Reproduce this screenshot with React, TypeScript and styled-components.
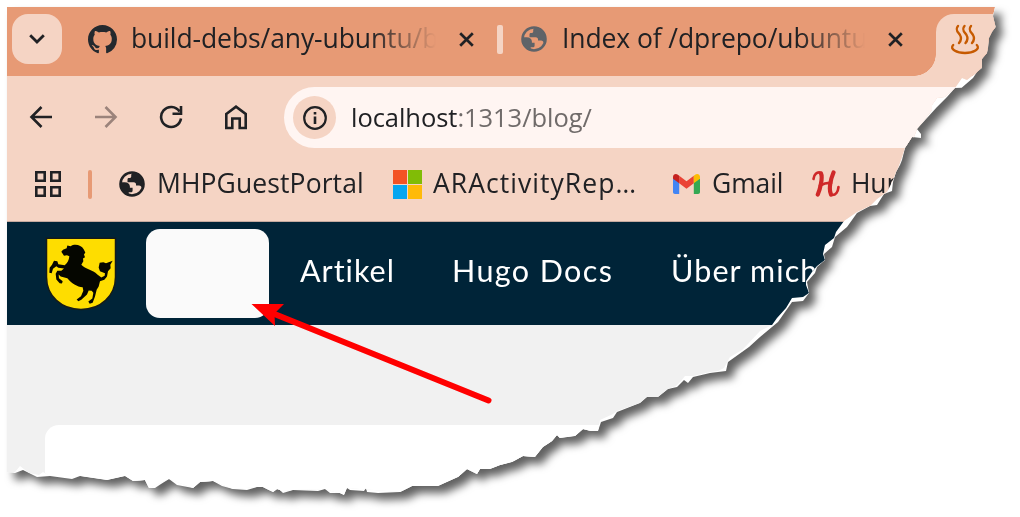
import React from "react";
import styled, { createGlobalStyle } from "styled-components";

const Global = createGlobalStyle`
  * { box-sizing: border-box; }
  body { margin: 0; background: #fff; overflow: hidden; }
`;

const ui = `"Open Sans", "Noto Sans", sans-serif`;

const paperEdge =
  "M0 0L988 0L986 9L988.7 20L985 25L982 31L981 41L980 46L975 52L975 61L970 65L966 71L959 77L954.7 80.7L948 81L940 90L930 100L920 111L910 122L914 127L914 131L905 130L898 141L895 153L893 158L889 165L886 175L885 184L877 187L870 198L863 199L850 206L840 220L828 230L825 240L817 247L818 253L810 260L808 266L800 275L802 286L796 294L785 295L778 305L771 315L753 330L742 340L735 345L721 355L719 364L703 366L686 370L681 376L677 373L670 380L661 382L651 390L640 390L633 396L610 405L606 411L594 415L591 424L584 424L576 422L568 429L553 431L550 428L545 434L536 440L528 450L516 449L505 455L493 458L483 462L473 462L470 467L460 462L451 470L431 479L405 479L393 485L371 486L360 485L359 481L357 484L343 483L340 481L337 488L333 486L323 486L318 482L311 484L286 483L276 486L273 483L270 482L266 485L262 483L256 480L250 480L240 483L226 482L215 479L206 474L193 475L186 481L170 478L162 472L154 477L148 481L142 481L138 473L126 474L118 469L100 473L73 469L65 472L43 469L30 470L16 463L8 466L0 465Z";
const printEdge =
  "M0 0L988 0L986 9L988.7 20L985 25L982 31L981 41L980 46L975 52L975 60L969 66L960 73L955 71L948 81L938 90L930 91L925 98L925 103L919 111L910 122L907 130L898 141L894 153L890 164L885 175L880 185L870 192L863 199L850 205L837 214L829 225L827 231L818 238L816 247L818 253L810 259L805 265L799 274L799 278L802 286L796 290L785 291L779 301L770 311L765 318L753 324L741 337L735 343L723 350L717 361L711 364L703 365L686 369L678 369L674 374L669 379L661 382L651 390L640 390L633 396L610 404L606 407L593 413L591 424L568 429L553 431L536 440L528 450L505 455L483 462L470 467L451 470L431 479L393 485L340 481L337 488L318 482L286 483L266 485L250 480L226 482L206 474L186 481L162 472L142 481L126 474L118 469L100 473L73 469L43 469L36 465L32 468L22 466L13 459L8 465L0 465Z";

const Stage = styled.main`
  width: 1020px;
  height: 517px;
  padding: 7px 0 0 7px;
  overflow: hidden;
  background: #fff;
`;
const Shadow = styled.div`
  width: 1013px;
  height: 510px;
  filter: drop-shadow(7px 7px 4px rgba(0, 0, 0, 0.62));
`;
const Paper = styled.div`
  height: 510px;
  background: #fff;
  clip-path: path("${paperEdge}");
`;
const Print = styled.div`
  position: relative;
  height: 510px;
  background: #f1f1f1;
  clip-path: path("${printEdge}");
`;

const TabStrip = styled.div`
  display: flex;
  height: 69px;
  padding: 7px 0 0 5px;
  background: #e79a75;
  & > * { flex: none; }
`;
const TabSearch = styled.button`
  display: grid;
  place-items: center;
  width: 50px;
  height: 50px;
  padding: 0;
  border: 0;
  border-radius: 16px;
  background: #f5d4c4;
`;
const Tab = styled.div<{ $lead: number }>`
  display: flex;
  align-items: center;
  height: 50px;
  margin-left: ${(p) => p.$lead}px;
`;
const Label = styled.span<{ $w: number; $ls: number; $gap: number }>`
  width: ${(p) => p.$w}px;
  margin-left: ${(p) => p.$gap}px;
  padding-bottom: 2px;
  overflow: hidden;
  flex: none;
  font: 400 26.5px/40px ${ui};
  letter-spacing: ${(p) => p.$ls}px;
  white-space: nowrap;
  color: #202124;
`;
const FadeLabel = styled(Label)`
  mask-image: linear-gradient(90deg, #000 calc(100% - 66px), transparent);
`;
const Close = styled.svg`
  width: 15px;
  height: 15px;
  margin-left: 23px;
`;
const Divider = styled.i<{ $w: number; $c: string; $gap: number }>`
  width: ${(p) => p.$w}px;
  height: 29px;
  margin-left: ${(p) => p.$gap}px;
  border-radius: 2px;
  background: ${(p) => p.$c};
`;
const ActiveTab = styled.div`
  position: relative;
  width: 120px;
  height: 62px;
  margin-left: 33px;
  padding: 10px 0 0 14px;
  border-radius: 18px 0 0 0;
  background: #f5d4c4;
  &::before {
    content: "";
    position: absolute;
    left: -22px;
    bottom: 0;
    width: 22px;
    height: 22px;
    background: radial-gradient(circle at 0 0, transparent 21.5px, #f5d4c4 22px);
  }
`;
const Chrome = styled.div`
  height: 146px;
  background: #f5d4c4;
  border-bottom: 1px solid #c5aaa0;
`;
const Toolbar = styled.div`
  display: flex;
  align-items: center;
  height: 83px;
  padding-left: 20px;
`;
const ToolButton = styled.button`
  display: grid;
  place-items: center;
  flex: none;
  width: 28px;
  height: 28px;
  margin: 0 37px 1px 0;
  padding: 0;
  border: 0;
  background: none;
`;
const Address = styled.div`
  display: flex;
  align-items: center;
  flex: none;
  width: 740px;
  height: 61px;
  margin-left: -3px;
  padding-left: 9px;
  border-radius: 31px 0 0 31px;
  background: #fff5f2;
`;
const SiteInfo = styled.div`
  display: grid;
  place-items: center;
  width: 43px;
  height: 43px;
  border-radius: 50%;
  background: #f5d4c4;
`;
const Url = styled.span`
  margin-left: 15px;
  padding-bottom: 2px;
  font: 400 25.5px/40px ${ui};
  letter-spacing: -0.05px;
  color: #202124;
  span { color: #706b6a; }
`;
const Bookmarks = styled.div`
  display: flex;
  align-items: center;
  height: 50px;
  padding-left: 28px;
  & > * { flex: none; }
`;
const BookmarkIcon = styled.span<{ $gap: number }>`
  display: flex;
  flex: none;
  margin-left: ${(p) => p.$gap}px;
`;
const SiteNav = styled.nav`
  display: flex;
  align-items: center;
  height: 103px;
  padding-left: 38px;
  background: #002438;
`;
const Blank = styled.div`
  width: 123px;
  height: 89px;
  margin-left: 29px;
  border-radius: 14px;
  background: #fafafa;
`;
const NavLink = styled.a<{ $w: number; $gap: number; $ls: number }>`
  flex: none;
  width: ${(p) => p.$w}px;
  margin-left: ${(p) => p.$gap}px;
  padding-bottom: 7px;
  font: 400 30.5px/40px Lato, sans-serif;
  letter-spacing: ${(p) => p.$ls}px;
  white-space: nowrap;
  color: #fff;
`;
const PageBody = styled.section`
  padding: 100px 0 0 38px;
`;
const Card = styled.div`
  height: 100px;
  border-radius: 14px 0 0 0;
  background: #fff;
`;
const Arrow = styled.svg`
  position: absolute;
  left: 243px;
  top: 293px;
`;

const Globe = ({ color, size = 26 }: { color: string; size?: number }) => (
  <svg width={size} height={size} viewBox="0 0 26 26">
    <circle cx="13" cy="13" r="11.5" fill="none" stroke={color} strokeWidth="2.6" />
    <path
      fill={color}
      d="M16.5 1.2c-3 .1-4.300 1.300-4.300 3v1.600c0 1-1 1.200-2 1.200-1.400 0-1.700.6-1.700 1.800v2.400h6.200c1.700 0 2.300 1 2.300 2.200v1.200h3c1.600 0 2.500.8 2.800 2.600 3.300-5.800.9-13.600-6.300-16zM1.400 11.200h4.200c3.200 0 5.300 1.700 5.300 4.300v1.200h2.700v2.700c0 1.300-.6 1.900-2.200 1.900H9.700v3.400C4 23.400.5 17.600 1.400 11.200z"
    />
  </svg>
);
const CloseIcon = () => (
  <Close viewBox="0 0 15 15">
    <path d="M1.200 1.200 13.800 13.800M13.800 1.200 1.200 13.800" stroke="#202124" strokeWidth="2.700" />
  </Close>
);
const line = { fill: "none", stroke: "#202124", strokeWidth: 2.6 };

export default function App() {
  return (
    <Stage>
      <Global />
      <Shadow>
        <Paper>
          <Print>
            <TabStrip>
              <TabSearch>
                <svg width="16" height="10" viewBox="0 0 16 10">
                  <path d="M1.200 1.200 8 8l6.800-6.800" {...line} strokeWidth={2.8} />
                </svg>
              </TabSearch>
              <Tab $lead={26}>
                <svg width="29" height="29" viewBox="0 0 16 16" fill="#24292e">
                  <path d="M8 0C3.580 0 0 3.580 0 8c0 3.540 2.290 6.530 5.470 7.590.4.070.55-.17.55-.38 0-.19-.01-.82-.01-1.490-2.010.37-2.530-.49-2.690-.94-.09-.23-.48-.94-.82-1.130-.28-.15-.68-.52-.01-.53.63-.01 1.080.58 1.230.82.72 1.210 1.870.87 2.330.66.07-.52.28-.87.51-1.070-1.780-.2-3.640-.89-3.640-3.950 0-.87.31-1.590.82-2.150-.08-.2-.36-1.020.08-2.120 0 0 .67-.21 2.200.82.64-.18 1.320-.27 2-.27s1.360.09 2 .27c1.530-1.040 2.200-.82 2.200-.82.44 1.100.16 1.920.08 2.120.51.56.82 1.270.82 2.150 0 3.070-1.870 3.750-3.650 3.950.29.25.54.73.54 1.480 0 1.070-.01 1.930-.01 2.200 0 .21.15.46.55.38A8.010 8.010 0 0 0 16 8c0-4.420-3.580-8-8-8z" />
                </svg>
                <FadeLabel $w={305} $gap={14} $ls={-0.1}>build-debs/any-ubuntu/b</FadeLabel>
                <CloseIcon />
              </Tab>
              <Tab $lead={0}>
                <Divider $w={6} $c="#f5d4c4" $gap={23} />
                <BookmarkIcon $gap={18}><Globe color="#5f6368" /></BookmarkIcon>
                <FadeLabel $w={303} $gap={15} $ls={-0.1}>Index of /dprepo/ubuntu</FadeLabel>
                <CloseIcon />
              </Tab>
              <ActiveTab>
                <svg width="30" height="32" viewBox="0 0 30 32" fill="none" stroke="#c65a00" strokeWidth="2.400" strokeLinecap="round">
                  <path d="M8 2c-3.500 4 .5 6.500 2 9s1.500 5-1 8M14.500 2c-3.500 4 .5 6.500 2 9s1.500 5-1 8M21 2c-3.500 4 .5 6.500 2 9s1.500 5-1 8" />
                  <path d="M3.200 21C-1 25 7 29 15 29s16-4 11.800-8" />
                </svg>
              </ActiveTab>
            </TabStrip>
            <Chrome>
              <Toolbar>
                <ToolButton>
                  <svg width="24" height="24" viewBox="0 0 24 24"><path d="M23 12H2.500M12.500 2 2.500 12l10 10" {...line} /></svg>
                </ToolButton>
                <ToolButton>
                  <svg width="24" height="24" viewBox="0 0 24 24"><path d="M1 12h20.500M11.500 2l10 10-10 10" {...line} stroke="#9b837b" /></svg>
                </ToolButton>
                <ToolButton>
                  <svg width="24" height="24" viewBox="0 0 24 24"><path d="M22 13.500A10 10 0 1 1 20.500 6.500M22 1v7.800h-8.500" {...line} /></svg>
                </ToolButton>
                <ToolButton>
                  <svg width="24" height="26" viewBox="0 0 24 26"><path d="M2.300 10 12 2.600 21.700 10v14h-6v-9.500H8.300V24h-6z" {...line} /></svg>
                </ToolButton>
                <Address>
                  <SiteInfo>
                    <svg width="24" height="24" viewBox="0 0 24 24">
                      <circle cx="12" cy="12" r="10.800" {...line} strokeWidth={2.200} />
                      <path d="M12 10.500v7.500M12 6v2.600" {...line} />
                    </svg>
                  </SiteInfo>
                  <Url>localhost<span>:1313/blog/</span></Url>
                </Address>
              </Toolbar>
              <Bookmarks>
                <svg width="26" height="26" viewBox="0 0 26 26"><path d="M1.300 1.300h8.400v8.400H1.300zM16.300 1.300h8.400v8.400h-8.400zM1.300 16.300h8.400v8.400H1.300zM16.300 16.300h8.400v8.400h-8.400z" {...line} /></svg>
                <Divider $w={4} $c="#e79a75" $gap={27} />
                <BookmarkIcon $gap={27}><Globe color="#202124" /></BookmarkIcon>
                <Label $w={210} $gap={12} $ls={0.1}>MHPGuestPortal</Label>
                <BookmarkIcon $gap={26}>
                  <svg width="29" height="29" viewBox="0 0 29 29">
                    <path fill="#f35325" d="M0 0h14v14H0z" /><path fill="#81bc06" d="M15 0h14v14H15z" />
                    <path fill="#05a6f0" d="M0 15h14v14H0z" /><path fill="#ffba08" d="M15 15h14v14H15z" />
                  </svg>
                </BookmarkIcon>
                <Label $w={215} $gap={11} $ls={1.05}>ARActivityRep…</Label>
                <BookmarkIcon $gap={25}>
                  <svg width="27" height="20" viewBox="0 0 27 20">
                    <path fill="#4285f4" d="M0 5h6.200v15H2c-1.200 0-2-.8-2-2z" />
                    <path fill="#34a853" d="M20.800 5H27v13c0 1.200-.8 2-2 2h-4.200z" />
                    <path fill="#ea4335" d="m6.200 1.800 7.300 5.500 7.300-5.500v7.400l-7.300 5.500-7.300-5.500z" />
                    <path fill="#c5221f" d="M0 3C0 .5 2.800-.9 4.900.8l1.300 1v7.400L0 4.800z" />
                    <path fill="#fbbc04" d="M27 3c0-2.500-2.800-3.900-4.900-2.200l-1.300 1v7.400L27 4.800z" />
                  </svg>
                </BookmarkIcon>
                <Label $w={76} $gap={12} $ls={-0.1}>Gmail</Label>
                <BookmarkIcon $gap={24}>
                  <svg width="28" height="28" viewBox="0 0 28 28" fill="none" stroke="#cf2929" strokeLinecap="round">
                    <path strokeWidth="2.600" d="M1.500 9C2 4 5 2 8 2.500M26.500 17c-.5 5-3 8-6 8" />
                    <path strokeWidth="4.200" d="M9 3.500c2 4-1 16-3.200 21M21.500 2.500c-3 7-5 17-2.500 22" />
                    <path strokeWidth="2.800" d="M8 15.500c4-2 8-3 11-2.500" />
                  </svg>
                </BookmarkIcon>
                <Label $w={120} $gap={11} $ls={-0.2}>Humble</Label>
              </Bookmarks>
            </Chrome>
            <SiteNav>
              <svg width="72" height="74" viewBox="0 0 72 74">
                <path fill="#fedd00" stroke="#151b18" strokeWidth="1.500" d="M1.500 1.300h69V40c0 19-15 32.500-34.500 32.500S1.500 59 1.500 40z" />
                <g transform="translate(-5 -6.500) scale(.33333)" fill="#050600">
                  <path d="M64 64 69 58 80 53 82 45 92 47C105 39 124 44 131 56L136 66 132 72 135 80 129 84 130 92 124 103C136 116 158 118 172 132L184 141 194 136 195 128 180 122 176 111 179 97 190 95 198 98 218 91 211 103 212 113 204 122 201 138 193 148 180 152 176 168 170 178 165 198 158 217 149 220 145 213 157 204 160 187 155 181 146 180 141 192 124 208 115 212 110 207 123 197 130 181 128 170C112 169 94 158 82 143L62 138 56 132 57 143 68 152 66 159 59 158 49 147 47 130 52 121 64 121 72 114 55 112 49 107 39 115 35 128 28 127 29 112 36 103 42 91 52 92 55 101 74 104C82 98 87 88 88 77L81 74 72 76Z" />
                </g>
              </svg>
              <Blank />
              <NavLink $w={96} $gap={31} $ls={1}>Artikel</NavLink>
              <NavLink $w={163} $gap={56} $ls={1.4}>Hugo Docs</NavLink>
              <NavLink $w={170} $gap={56} $ls={1.1}>Über mich</NavLink>
            </SiteNav>
            <PageBody><Card /></PageBody>
            <Arrow width="252" height="115" viewBox="0 0 252 115">
              <path d="M22 13 238.500 100.500" stroke="#f00" strokeWidth="6" strokeLinecap="round" />
              <path d="M1.500 4 34 4 24.500 13.500 25 26z" fill="#f00" />
            </Arrow>
          </Print>
        </Paper>
      </Shadow>
    </Stage>
  );
}
